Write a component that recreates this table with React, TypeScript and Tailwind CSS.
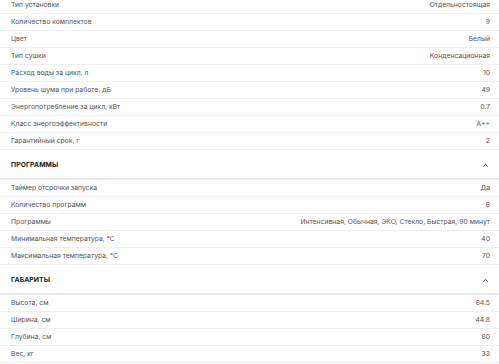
import React from 'react'

type Row = [string, string]

const main: Row[] = [
  ['Тип установки', 'Отдельностоящая'],
  ['Количество комплектов', '9'],
  ['Цвет', 'Белый'],
  ['Тип сушки', 'Конденсационная'],
  ['Расход воды за цикл, л', '10'],
  ['Уровень шума при работе, дБ', '49'],
  ['Энергопотребление за цикл, кВт', '0.7'],
  ['Класс энергоэффективности', 'A++'],
  ['Гарантийный срок, г', '2'],
]

const programs: Row[] = [
  ['Таймер отсрочки запуска', 'Да'],
  ['Количество программ', '6'],
  ['Программы', 'Интенсивная, Обычная, ЭКО, Стекло, Быстрая, 90 минут'],
  ['Минимальная температура, °С', '40'],
  ['Максимальная температура, °С', '70'],
]

const sizes: Row[] = [
  ['Высота, см', '84.5'],
  ['Ширина, см', '44.8'],
  ['Глубина, см', '60'],
  ['Вес, кг', '33'],
]

function SpecRow({ row }: { row: Row }) {
  return (
    <div className="flex h-[17px] items-center justify-between border-b border-[#efefef] pl-[11px] pr-[9px] text-[6.8px] text-[#555555]">
      <span>{row[0]}</span>
      <span>{row[1]}</span>
    </div>
  )
}

function SectionHeader({ title }: { title: string }) {
  return (
    <div className="flex h-[30px] items-center justify-between border-b-2 border-[#e6e6e6] pl-[11px] pr-[10px] pt-[3px]">
      <span className="text-[6.8px] font-bold tracking-[0.1px] text-[#222222]">{title}</span>
      <svg width="7" height="5" viewBox="0 0 7 5">
        <path d="M1.2 3.6 L3.5 1.4 L5.8 3.6" fill="none" stroke="#444" strokeWidth="1" />
      </svg>
    </div>
  )
}

export default function App() {
  return (
    <div className="h-[364px] w-[499px] overflow-hidden bg-white" style={{ fontFamily: 'Inter, "Noto Sans", sans-serif' }}>
      <div className="-mt-[3px]">
        {main.map((r, i) => (
          <SpecRow key={i} row={r} />
        ))}
        <SectionHeader title="ПРОГРАММЫ" />
        {programs.map((r, i) => (
          <SpecRow key={i} row={r} />
        ))}
        <SectionHeader title="ГАБАРИТЫ" />
        {sizes.map((r, i) => (
          <SpecRow key={i} row={r} />
        ))}
      </div>
    </div>
  )
}
